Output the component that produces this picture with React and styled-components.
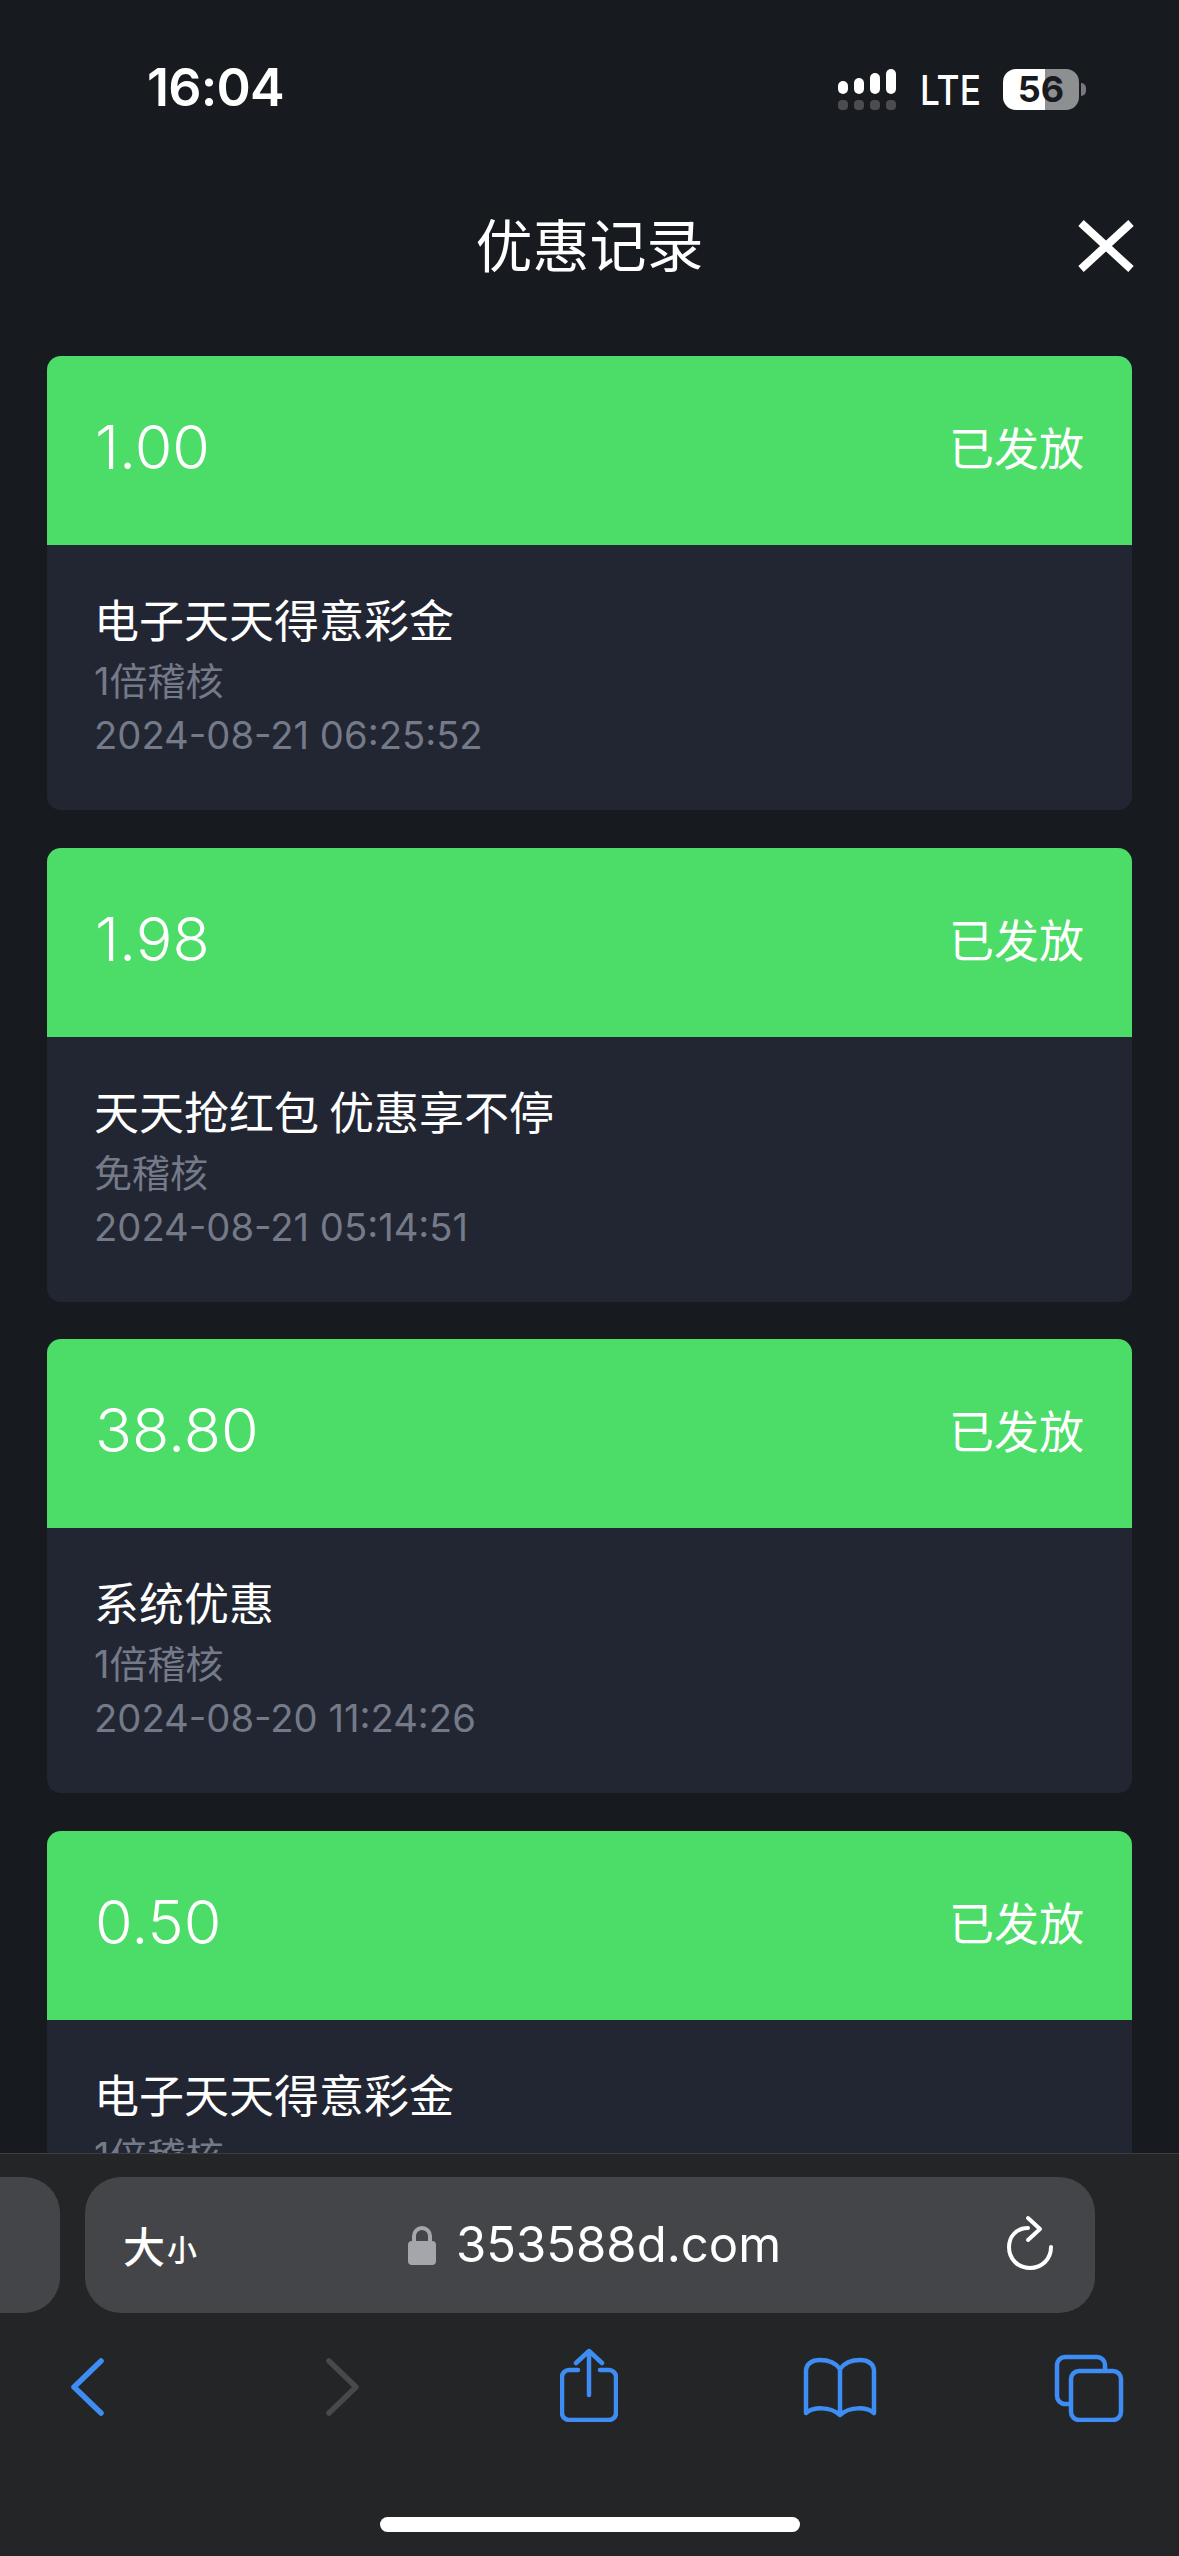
import React from "react";
import styled, { createGlobalStyle } from "styled-components";

const Global = createGlobalStyle`
  html, body { margin: 0; padding: 0; background: #171a1f; }
  * { box-sizing: border-box; }
`;
const CJK = `Inter, "Noto Sans CJK SC", sans-serif`;

const Screen = styled.div`
  width: 1179px; height: 2556px; display: flex; flex-direction: column;
  background: #171a1f; color: #fff; font-family: ${CJK}; overflow: hidden;
`;
const StatusBar = styled.div`
  height: 180px; flex: none; padding: 60px 93px 0 147px;
  display: flex; justify-content: space-between; align-items: flex-start;
`;
const Clock = styled.div`font-size: 52px; line-height: 56px; font-weight: 600; letter-spacing: -0.8px; font-family: Inter, sans-serif;`;
const StatusRight = styled.div`display: flex; align-items: center; gap: 24px; margin-top: 7px;`;
const Lte = styled.div`
  width: 59px; font-size: 41px; line-height: 41px; font-weight: 500; margin-top: 3px;
  transform: scaleX(0.86); transform-origin: left center; white-space: nowrap;
`;
const BatteryWrap = styled.div`display: flex; align-items: center; gap: 2px; margin-left: 0;`;
const Battery = styled.div`
  width: 76px; height: 41px; border-radius: 13px; color: #171a1f;
  background: linear-gradient(90deg, #fff 0 55%, #8e8f91 55% 100%);
  font-size: 36px; line-height: 41px; font-weight: 700; text-align: center; font-family: Inter, sans-serif;
`;
const Nub = styled.div`width: 5px; height: 13px; border-radius: 0 6px 6px 0; background: #77787a;`;

const Header = styled.div`
  height: 176px; flex: none; position: relative;
  display: flex; align-items: flex-start; justify-content: center; padding-top: 27px;
`;
const Title = styled.div`font-size: 57px; line-height: 70px; font-weight: 400; font-family: "Noto Sans CJK SC", sans-serif;`;
const Close = styled.svg`position: absolute; left: 1076px; top: 38px;`;

const List = styled.div`flex: 1; min-height: 0; overflow: hidden; padding: 0 47px; display: flex; flex-direction: column; gap: 37.67px;`;
const Card = styled.div`flex: none; border-radius: 14px; overflow: hidden; background: #222633;`;
const CardHead = styled.div`
  height: 189px; background: #4cdc68; padding: 0 48px 7px; display: flex; align-items: center; justify-content: space-between;
`;
const Amount = styled.div`font-size: 61px; line-height: 70px; font-weight: 300; font-family: Inter, sans-serif;`;
const State = styled.div`font-size: 45px; line-height: 60px; font-family: "Noto Sans CJK SC", sans-serif;`;
const CardBody = styled.div`height: 265px; padding: 44px 47px 0; display: flex; flex-direction: column;`;
const Name = styled.div`font-size: 45px; line-height: 60px; font-family: "Noto Sans CJK SC", sans-serif;`;
const Audit = styled.div`font-size: 38px; line-height: 56px; color: #757a88; margin-top: 4px;`;
const When = styled.div`font-size: 38.2px; line-height: 52px; color: #757a88; font-family: Inter, sans-serif;`;

const Toolbar = styled.div`
  height: 403px; flex: none; background: #242527; border-top: 1px solid #3c3e43; position: relative; z-index: 1;
`;
const PillRow = styled.div`display: flex; gap: 25px; margin: 23px 0 0 -40px; height: 136px;`;
const SidePill = styled.div`width: 100px; flex: none; background: #444548; border-radius: 36px;`;
const UrlPill = styled.div`
  width: 1010px; flex: none; background: #444548; border-radius: 36px; position: relative;
  display: flex; align-items: center; justify-content: center; padding-left: 9px;
`;
const Aa = styled.div`
  position: absolute; left: 38px; top: 44px; display: flex; align-items: flex-end; gap: 2px;
  font-family: "Noto Sans CJK SC", sans-serif; font-weight: 500;
`;
const AaBig = styled.span`font-size: 42px; line-height: 48px;`;
const AaSmall = styled.span`font-size: 30px; line-height: 42px;`;
const Url = styled.div`display: flex; align-items: center; gap: 20px; font-size: 49px; line-height: 60px;`;
const Reload = styled.svg`position: absolute; left: 922px; top: 38px;`;
const Nav = styled.div`position: relative; height: 120px;`;
const NavIcon = styled.svg`position: absolute; left: ${p => p.$x}px; top: ${p => p.$y}px;`;
const Home = styled.div`position: absolute; left: 380px; top: 363px; width: 420px; height: 15px; border-radius: 8px; background: #fff;`;

const cards = [
  ["1.00", "电子天天得意彩金", "1倍稽核", "2024-08-21 06:25:52"],
  ["1.98", "天天抢红包 优惠享不停", "免稽核", "2024-08-21 05:14:51"],
  ["38.80", "系统优惠", "1倍稽核", "2024-08-20 11:24:26"],
  ["0.50", "电子天天得意彩金", "1倍稽核", "2024-08-20 06:25:52"],
];

const barHeights = [13, 16, 21, 25];

export default function App() {
  return (
    <Screen>
      <Global />
      <StatusBar>
        <Clock>16:04</Clock>
        <StatusRight>
          <svg width="58" height="41" viewBox="0 0 58 41">
            {barHeights.map((h, i) => (
              <rect key={i} x={i * 16} y={25 - h} width="10" height={h} rx="5" fill="#fff" />
            ))}
            {barHeights.map((_, i) => (
              <rect key={i} x={i * 16} y="31" width="10" height="10" rx="4" fill="#4a4c50" />
            ))}
          </svg>
          <Lte>LTE</Lte>
          <BatteryWrap>
            <Battery>56</Battery>
            <Nub />
          </BatteryWrap>
        </StatusRight>
      </StatusBar>
      <Header>
        <Title>优惠记录</Title>
        <Close width="60" height="56" viewBox="0 0 60 56">
          <path d="M5 5 L55 51 M55 5 L5 51" stroke="#fff" strokeWidth="8" fill="none" />
        </Close>
      </Header>
      <List>
        {cards.map((c, i) => (
          <Card key={i}>
            <CardHead>
              <Amount>{c[0]}</Amount>
              <State>已发放</State>
            </CardHead>
            <CardBody>
              <Name>{c[1]}</Name>
              <Audit>{c[2]}</Audit>
              <When>{c[3]}</When>
            </CardBody>
          </Card>
        ))}
      </List>
      <Toolbar>
        <PillRow>
          <SidePill />
          <UrlPill>
            <Aa><AaBig>大</AaBig><AaSmall>小</AaSmall></Aa>
            <Url>
              <svg width="28" height="40" viewBox="0 0 28 40">
                <path d="M6 18 V11 a8 8 0 0 1 16 0 V18" stroke="#a5a6ab" strokeWidth="4" fill="none" />
                <rect x="0" y="16" width="28" height="24" rx="4" fill="#a5a6ab" />
              </svg>
              353588d.com
            </Url>
            <Reload width="46" height="56" viewBox="0 0 46 56">
              <path d="M21 13 C9 13 2 22 2 32 C2 44 11 53 23 53 C35 53 44 44 44 32" stroke="#fff" strokeWidth="4" strokeLinecap="round" fill="none" />
              <path d="M21 3 L33 14 L21 25" stroke="#fff" strokeWidth="4" strokeLinecap="round" strokeLinejoin="round" fill="none" />
            </Reload>
          </UrlPill>
        </PillRow>
        <Nav>
          <NavIcon $x={70} $y={45} width="34" height="58" viewBox="0 0 34 58">
            <path d="M31 3 L4 29 L31 55" stroke="#3e8df5" strokeWidth="5.5" strokeLinecap="round" strokeLinejoin="round" fill="none" />
          </NavIcon>
          <NavIcon $x={326} $y={45} width="34" height="58" viewBox="0 0 34 58">
            <path d="M3 3 L30 29 L3 55" stroke="#48494c" strokeWidth="5.5" strokeLinecap="round" strokeLinejoin="round" fill="none" />
          </NavIcon>
          <NavIcon $x={560} $y={35} width="58" height="74" viewBox="0 0 58 74">
            <path d="M18 22 H9 a7 7 0 0 0 -7 7 V65 a7 7 0 0 0 7 7 H49 a7 7 0 0 0 7 -7 V29 a7 7 0 0 0 -7 -7 H40" stroke="#3e8df5" strokeWidth="4.5" strokeLinecap="round" fill="none" />
            <path d="M29 3 V47 M16 15 L29 3 L42 15" stroke="#3e8df5" strokeWidth="4.5" strokeLinecap="round" strokeLinejoin="round" fill="none" />
          </NavIcon>
          <NavIcon $x={803} $y={44} width="74" height="62" viewBox="0 0 74 62">
            <path d="M37 12 C32 5 24 3 17 3 C9 3 3 7 3 14 V56 C10 50 27 49 37 58 C47 49 64 50 71 56 V14 C71 7 65 3 57 3 C50 3 42 5 37 12 Z M37 12 V58" stroke="#3e8df5" strokeWidth="4.5" strokeLinecap="round" strokeLinejoin="round" fill="none" />
          </NavIcon>
          <NavIcon $x={1054} $y={41} width="70" height="68" viewBox="0 0 70 68">
            <path d="M15 50 H11 a8 8 0 0 1 -8 -8 V11 a8 8 0 0 1 8 -8 H43 a8 8 0 0 1 8 8 V16" stroke="#3e8df5" strokeWidth="4.5" fill="none" />
            <rect x="17" y="17" width="50" height="49" rx="8" stroke="#3e8df5" strokeWidth="4.5" fill="none" />
          </NavIcon>
        </Nav>
        <Home />
      </Toolbar>
    </Screen>
  );
}
